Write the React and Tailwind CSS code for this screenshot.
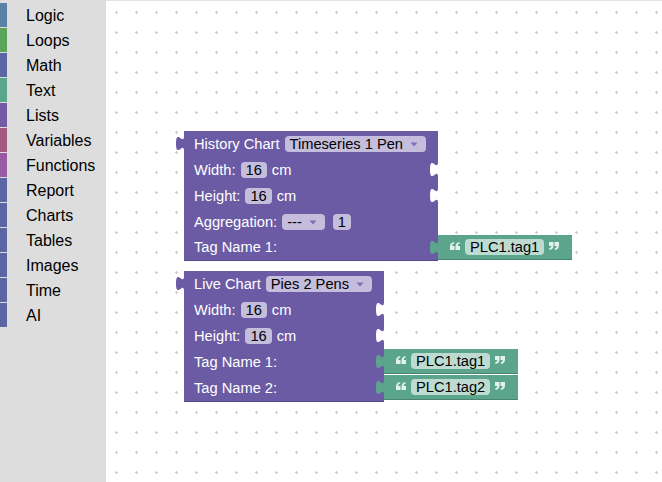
import React from "react";

const FONT = { fontFamily: '"Liberation Sans", Arial, sans-serif' };

const categories = [
  ["Logic", "#5b80a5"],
  ["Loops", "#5ba55b"],
  ["Math", "#5b67a5"],
  ["Text", "#5ba58c"],
  ["Lists", "#745ba5"],
  ["Variables", "#a55b80"],
  ["Functions", "#995ba5"],
  ["Report", "#5b67a5"],
  ["Charts", "#5b67a5"],
  ["Tables", "#5b67a5"],
  ["Images", "#5b67a5"],
  ["Time", "#5b67a5"],
  ["AI", "#5b67a5"],
];

function OutputTab({ color }) {
  return (
    <svg
      className="absolute left-[-8px] top-[5px] overflow-visible"
      width="9"
      height="15"
      viewBox="0 0 9 15"
    >
      <path
        d="M9,15 L8,15 c0,-10 -8,8 -8,-7.5 s8,2.5 8,-7.5 L9,0 Z"
        fill={color}
      />
    </svg>
  );
}

function Notch() {
  return (
    <svg
      className="absolute right-0 top-[5px] overflow-visible"
      width="8"
      height="15"
      viewBox="0 0 8 15"
    >
      <path d="M8.5,0 L8,0 c0,10 -8,-8 -8,7.5 s8,-2.5 8,7.5 L8.5,15 Z" fill="#ffffff" />
    </svg>
  );
}

function Arrow() {
  return (
    <svg width="8" height="5" viewBox="0 0 8 5" className="ml-[7px] mr-[8px]">
      <path d="M0.5,0.5 L7.5,0.5 L4,4.5 Z" fill="#7d70b6" />
    </svg>
  );
}

function Quote({ close }) {
  const mark = "M0,8 L0,4.6 C0,2.2 1.4,0.6 3.9,0 L4.4,1.3 C3,1.9 2.3,2.8 2.2,3.9 L4.5,3.9 L4.5,8 Z";
  return (
    <svg
      width="10"
      height="8"
      viewBox="0 0 10 8"
      className="mb-[3px] shrink-0"
      style={close ? { transform: "rotate(180deg)" } : undefined}
    >
      <path d={mark} fill="#e3f1ec" />
      <path d={mark} fill="#e3f1ec" transform="translate(5.5,0)" />
    </svg>
  );
}

function Dropdown({ label }) {
  return (
    <div className="flex h-[16px] items-center rounded-[4px] bg-[#c4bddb] pl-[5px] text-black">
      <span className="leading-none">{label}</span>
      <Arrow />
    </div>
  );
}

function NumField({ value }) {
  return (
    <div className="flex h-[16px] items-center rounded-[4px] bg-[#c4bddb] px-[5px] text-black">
      <span className="leading-none">{value}</span>
    </div>
  );
}

function TextBlock({ value, top }) {
  return (
    <div
      className="absolute left-full flex h-[25px] w-[134px] items-center border-b border-[#48846f] bg-[#5ba58c] pl-[12px]"
      style={{ top }}
    >
      <OutputTab color="#5ba58c" />
      <Quote />
      <div className="ml-[5px] flex h-[16px] items-center rounded-[4px] bg-[#bddbd1] px-[5px] text-black">
        <span className="leading-none">{value}</span>
      </div>
      <div className="ml-[5px] flex">
        <Quote close />
      </div>
    </div>
  );
}

function Row({ children, notch, h = 26, plug }) {
  return (
    <div
      className="relative flex items-center gap-[5px] pl-[10px]"
      style={{ height: h }}
    >
      {children}
      {notch && <Notch />}
      {plug}
    </div>
  );
}

function Grid() {
  return (
    <svg className="absolute inset-0" width="100%" height="100%">
      <defs>
        <pattern id="grid" width="20" height="20" patternUnits="userSpaceOnUse">
          <rect x="9" y="11" width="3" height="1" fill="#cccccc" />
          <rect x="10" y="10" width="1" height="3" fill="#cccccc" />
        </pattern>
      </defs>
      <rect width="100%" height="100%" fill="url(#grid)" />
    </svg>
  );
}

export default function App() {
  return (
    <div className="flex h-[482px] w-[662px] overflow-hidden bg-white" style={FONT}>
      <div className="flex w-[106px] shrink-0 flex-col bg-[#dddddd] pt-[3px]">
        {categories.map(([name, color]) => (
          <div key={name} className="flex h-[25px] items-start">
            <div className="h-[24px] w-[7px]" style={{ backgroundColor: color }} />
            <span className="ml-[19px] mt-[5px] text-[16px] leading-none text-black">{name}</span>
          </div>
        ))}
      </div>

      <div className="relative flex-1 border-t border-[#e2e2e2] bg-white">
        <Grid />

        {/* History Chart block */}
        <div className="absolute left-[78px] top-[130px] w-[254px] border-b border-[#54478a] bg-[#6b5ba5] text-[14.67px] text-white">
          <OutputTab color="#6b5ba5" />
          <Row>
            <span className="leading-none">History Chart</span>
            <Dropdown label="Timeseries 1 Pen" />
          </Row>
          <Row notch>
            <span className="leading-none">Width:</span>
            <NumField value="16" />
            <span className="leading-none">cm</span>
          </Row>
          <Row notch>
            <span className="leading-none">Height:</span>
            <NumField value="16" />
            <span className="leading-none">cm</span>
          </Row>
          <Row>
            <span className="leading-none">Aggregation:</span>
            <Dropdown label="---" />
            <div className="ml-[3px]">
              <NumField value="1" />
            </div>
          </Row>
          <Row h={25} plug={<TextBlock value="PLC1.tag1" top={0} />}>
            <span className="leading-none">Tag Name 1:</span>
          </Row>
        </div>

        {/* Live Chart block */}
        <div className="absolute left-[78px] top-[270px] w-[200px] border-b border-[#54478a] bg-[#6b5ba5] text-[14.67px] text-white">
          <OutputTab color="#6b5ba5" />
          <Row>
            <span className="leading-none">Live Chart</span>
            <Dropdown label="Pies 2 Pens" />
          </Row>
          <Row notch>
            <span className="leading-none">Width:</span>
            <NumField value="16" />
            <span className="leading-none">cm</span>
          </Row>
          <Row notch>
            <span className="leading-none">Height:</span>
            <NumField value="16" />
            <span className="leading-none">cm</span>
          </Row>
          <Row h={26} plug={<TextBlock value="PLC1.tag1" top={0} />}>
            <span className="leading-none">Tag Name 1:</span>
          </Row>
          <Row h={26} plug={<TextBlock value="PLC1.tag2" top={0} />}>
            <span className="leading-none">Tag Name 2:</span>
          </Row>
        </div>
      </div>
    </div>
  );
}
